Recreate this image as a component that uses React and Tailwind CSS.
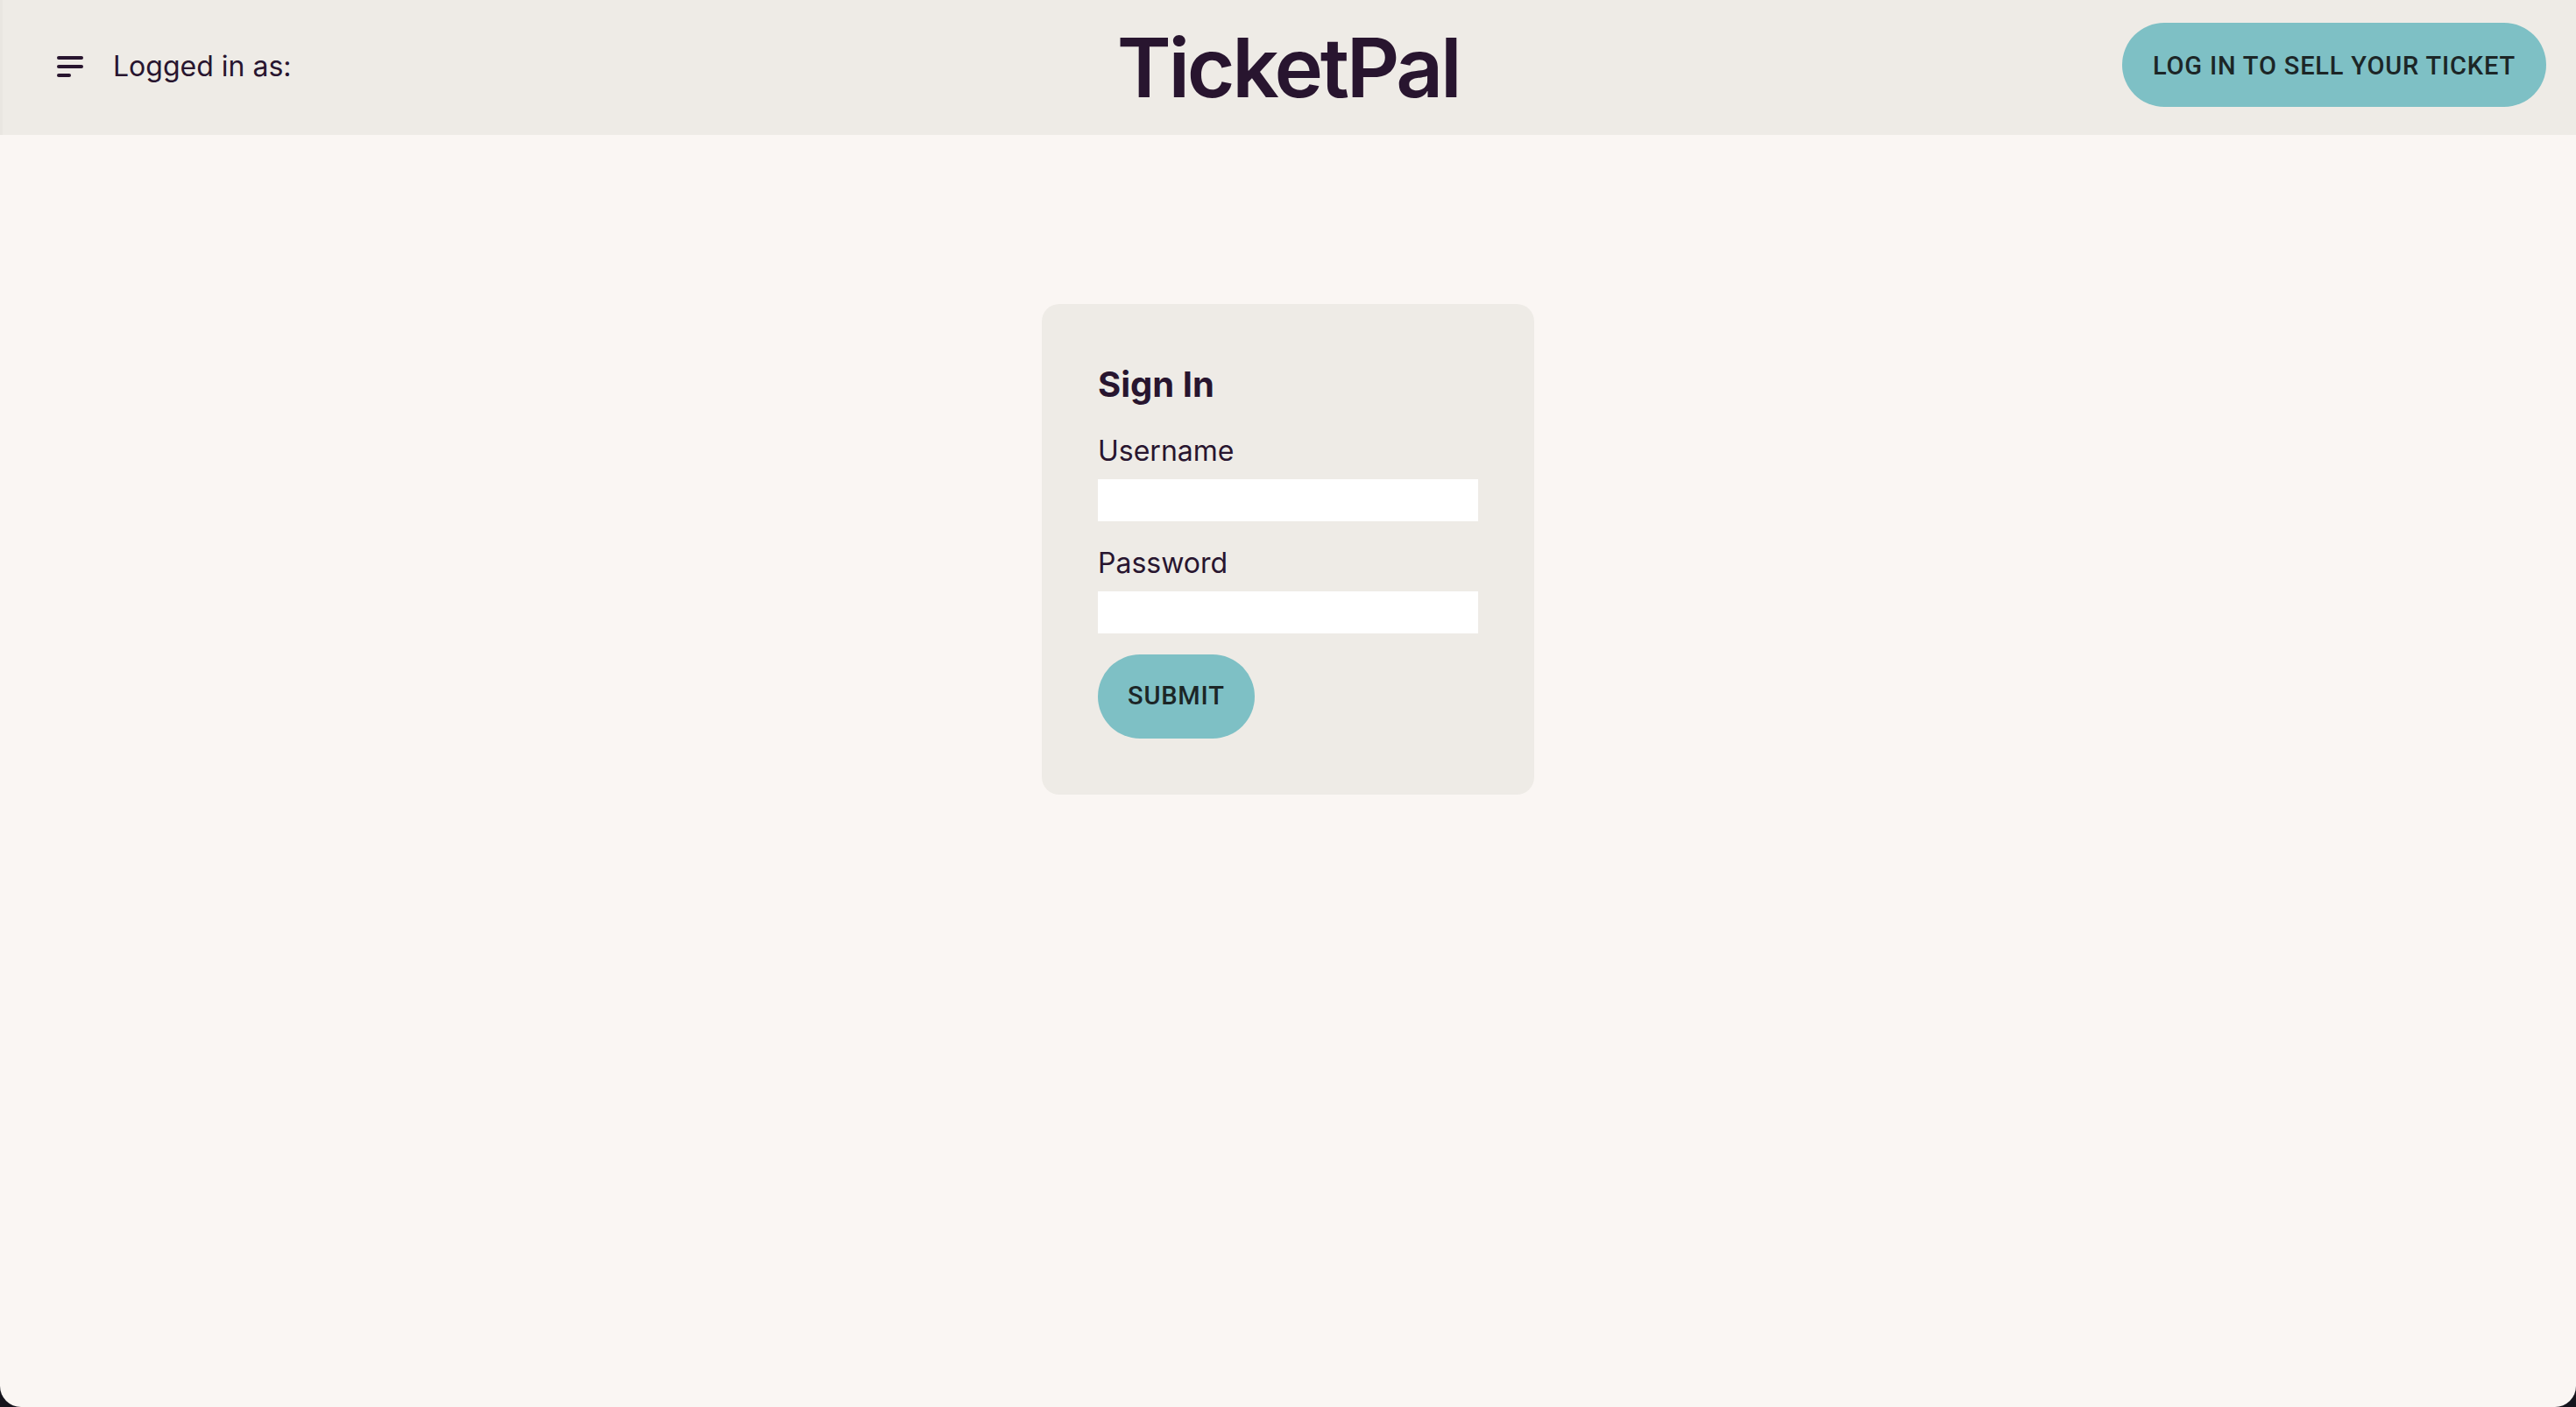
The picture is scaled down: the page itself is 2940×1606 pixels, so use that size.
export default function App() {
  return (
    <div className="min-h-screen bg-[#15141c]">
      <div className="min-h-screen bg-[#faf6f3] rounded-b-[24px] flex flex-col font-['Inter',sans-serif] text-[#28152f]">
        {/* top bar */}
        <header className="h-[154px] bg-[#eeebe6] grid grid-cols-3 items-center shadow-[inset_3px_0_0_#e9e6e1]">
          <div className="flex items-center pl-[65px] gap-[34px] mt-[-3px]">
            <svg width="30" height="24" viewBox="0 0 30 24">
              <g stroke="#28152f" strokeWidth="4" strokeLinecap="round">
                <line x1="2" y1="2" x2="28" y2="2" />
                <line x1="2" y1="12" x2="28" y2="12" />
                <line x1="2" y1="22" x2="14" y2="22" />
              </g>
            </svg>
            <span className="text-[32px] leading-[48px]">Logged in as:</span>
          </div>
          <div className="flex justify-center">
            <h1 className="text-[94px] font-semibold tracking-[-0.035em] leading-none">TicketPal</h1>
          </div>
          <div className="flex justify-end pr-[34px] mt-[-6px]">
            <button className="h-[96px] px-[35px] pt-[3px] rounded-full bg-[#7ec0c5] text-[#1c2627] font-['Roboto',sans-serif] font-medium text-[29px] tracking-[0.02857em] uppercase">
              Log in to sell your ticket
            </button>
          </div>
        </header>

        <main className="flex-1 flex justify-center pt-[193px]">
          <div className="w-[562px] h-fit bg-[#eeebe6] rounded-[20px] p-[64px] flex flex-col">
            <h2 className="text-[40px] font-bold leading-[56px] mb-[24px]">Sign In</h2>
            <label className="text-[32px] leading-[48px] mb-[8px]">Username</label>
            <input type="text" className="h-[48px] w-full bg-white outline-none mb-[24px]" />
            <label className="text-[32px] leading-[48px] mb-[8px]">Password</label>
            <input type="password" className="h-[48px] w-full bg-white outline-none mb-[24px]" />
            <div>
              <button className="h-[96px] px-[34px] rounded-full bg-[#7ec0c5] text-[#1c2627] font-['Roboto',sans-serif] font-medium text-[29px] tracking-[0.02857em] uppercase">
                Submit
              </button>
            </div>
          </div>
        </main>
      </div>
    </div>
  )
}
